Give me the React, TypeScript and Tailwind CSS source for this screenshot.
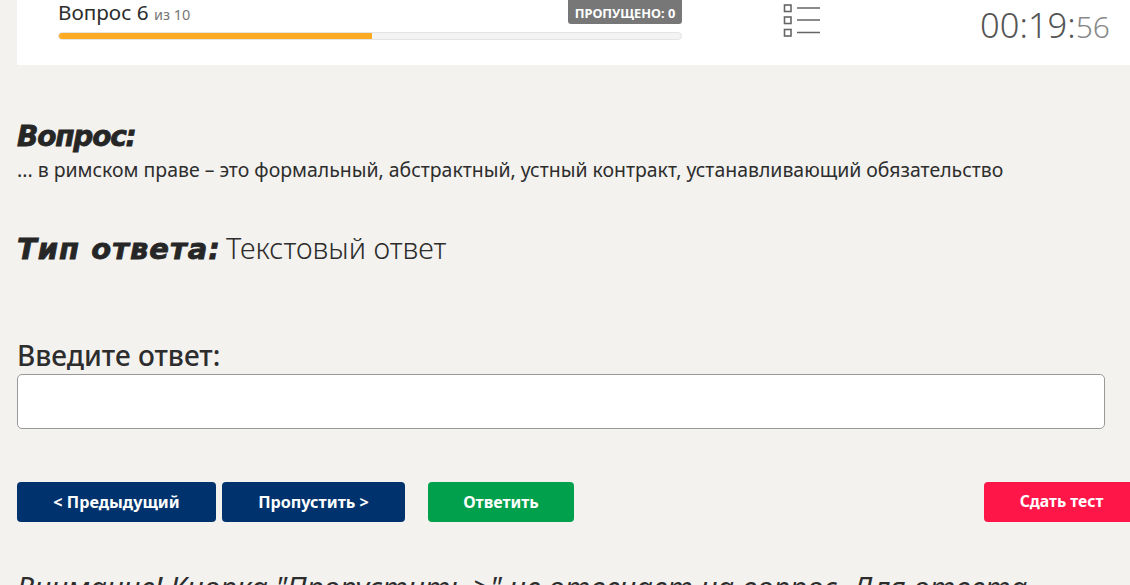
import React from 'react';

const sans = '[font-family:"Noto_Sans",sans-serif]';

const ListIcon = () => (
  <svg width="38" height="38" viewBox="0 0 38 38" fill="none" stroke="#666">
    <rect x="1.500" y="5" width="6.500" height="6.500" strokeWidth="1.600" />
    <rect x="1.500" y="17" width="6.500" height="6.500" strokeWidth="1.600" />
    <rect x="1.500" y="29.500" width="6.500" height="6.500" strokeWidth="1.600" />
    <path d="M14 8h23M14 20h23M14 32.500h23" strokeWidth="1.600" />
  </svg>
);

const Header = () => (
  <div className="flex h-[65px] ml-[17px] bg-white">
    <div className="w-[624px] ml-[41px] flex flex-col">
      <div className="flex justify-between items-start h-[32px]">
        <div className="text-[#2d2d2d] text-[20.700px] leading-[24px]">
          Вопрос 6 <span className="text-[14.500px] text-[#777]">из 10</span>
        </div>
        <div className="w-[114px] h-[24px] bg-[#777] rounded-b-[3px] text-white text-[12.800px] font-bold leading-[26px] text-center">
          ПРОПУЩЕНО: 0
        </div>
      </div>
      <div className="h-[8px] rounded-full bg-[#f3f3f3] border border-[#e4e4e4] overflow-hidden">
        <div className="h-full w-[313px] bg-[#fdab22]" />
      </div>
    </div>
    <div className="ml-[101px]">
      <ListIcon />
    </div>
    <div className="ml-auto pr-[20px] pt-[1px] font-light text-[#555] text-[34.500px] leading-[48px]">
      00:19:<span className="text-[30px] text-[#888]">56</span>
    </div>
  </div>
);

const App = () => {
  return (
    <div className={`w-[1130px] h-[585px] overflow-hidden bg-[#f3f2ef] text-[#2d2d2d] ${sans}`}>
      <Header />
      <div className="pl-[17px] pr-[25px]">
        <div className="mt-[54px] text-[28px] leading-[36px] font-black italic [font-family:'DejaVu_Sans',sans-serif] tracking-[-1.200px] text-[#262626] [-webkit-text-stroke:0.8px_#262626]">Вопрос:</div>
        <div className="pt-[1px] text-[19.450px] leading-[28px] whitespace-nowrap">
          ... в римском праве – это формальный, абстрактный, устный контракт, устанавливающий обязательство
        </div>
        <div className="mt-[44px] flex items-baseline gap-[5px]">
          <span className="text-[29px] leading-[40px] font-black italic [font-family:'DejaVu_Sans',sans-serif] tracking-[1px] text-[#262626] [-webkit-text-stroke:0.8px_#262626]">Тип ответа:</span>
          <span className="text-[28.800px] leading-[40px] font-light">Текстовый ответ</span>
        </div>
        <div className="mt-[68px] text-[28px] leading-[36px] font-medium">Введите ответ:</div>
        <input className="block mt-[1px] w-[1088px] h-[55px] bg-white border border-[#999] rounded-[5px]" />
        <div className="mt-[53px] flex">
          <button className="w-[199px] h-[40px] rounded-[4px] bg-[#00336e] text-white text-[16.200px] font-bold">&lt; Предыдущий</button>
          <button className="ml-[6px] w-[183px] h-[40px] rounded-[4px] bg-[#00336e] text-white text-[16.200px] font-bold">Пропустить &gt;</button>
          <button className="ml-[23px] w-[146px] h-[40px] rounded-[4px] bg-[#00a04c] text-white text-[16px] font-bold">Ответить</button>
          <button className="ml-auto -mr-[34px] w-[155px] shrink-0 h-[40px] rounded-l-[4px] bg-[#ff1648] text-white text-[15.700px] font-bold">Сдать тест</button>
        </div>
        <div className="mt-[47px] whitespace-nowrap italic text-[29.500px] leading-[36px]">
          Внимание! Кнопка "Пропустить &gt;" не отвечает на вопрос. Для ответа
        </div>
      </div>
    </div>
  );
};

export default App;
